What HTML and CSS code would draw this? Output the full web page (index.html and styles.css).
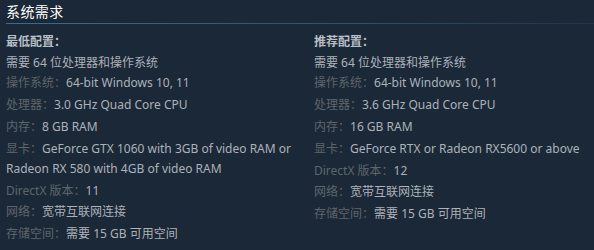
FILE: index.html
```
<!DOCTYPE html>
<html lang="zh-CN">
<head>
<meta charset="utf-8">
<link rel="stylesheet" href="styles.css">
</head>
<body>
<div class="sysreq">
  <h2 class="title">系统需求</h2>
  <div class="cols">
    <div class="col">
      <div class="head">最低配置：</div>
      <ul class="list">
        <li>需要 64 位处理器和操作系统</li>
        <li><span class="lbl">操作系统：</span>64-bit Windows 10, 11</li>
        <li><span class="lbl">处理器：</span>3.0 GHz Quad Core CPU</li>
        <li><span class="lbl">内存：</span>8 GB RAM</li>
        <li><span class="lbl">显卡：</span>GeForce GTX 1060 with 3GB of video RAM or Radeon RX 580 with 4GB of video RAM</li>
        <li><span class="lbl">DirectX 版本：</span>11</li>
        <li><span class="lbl">网络：</span>宽带互联网连接</li>
        <li><span class="lbl">存储空间：</span>需要 15 GB 可用空间</li>
      </ul>
    </div>
    <div class="col">
      <div class="head">推荐配置：</div>
      <ul class="list">
        <li>需要 64 位处理器和操作系统</li>
        <li><span class="lbl">操作系统：</span>64-bit Windows 10, 11</li>
        <li><span class="lbl">处理器：</span>3.6 GHz Quad Core CPU</li>
        <li><span class="lbl">内存：</span>16 GB RAM</li>
        <li><span class="lbl">显卡：</span>GeForce RTX or Radeon RX5600 or above</li>
        <li><span class="lbl">DirectX 版本：</span>12</li>
        <li><span class="lbl">网络：</span>宽带互联网连接</li>
        <li><span class="lbl">存储空间：</span>需要 15 GB 可用空间</li>
      </ul>
    </div>
  </div>
</div>
</body>
</html>
```

FILE: styles.css
```
html, body {
  margin: 0;
  padding: 0;
  background: #1b2838;
}
body {
  font-family: "Noto Sans", "Noto Sans CJK SC", sans-serif;
  font-size: 12px;
  color: #acb2b8;
}
.sysreq {
  padding: 0 0 0 6px;
}
.title {
  margin: 0;
  padding-top: 3px;
  height: 20px;
  font-size: 14px;
  line-height: 18px;
  font-weight: normal;
  letter-spacing: 0.03em;
  color: #ffffff;
  border-bottom: 1px solid transparent;
  border-image: linear-gradient(to right, #3d6c8d 0%, #2e4f69 60%, #22354a 100%) 1;
}
.cols {
  display: grid;
  grid-template-columns: 300px 1fr;
  column-gap: 8px;
  padding-top: 8px;
}
.head {
  line-height: 20px;
  margin-bottom: 1px;
  color: #b8bfc6;
  font-weight: bold;
}
.list {
  list-style: none;
  margin: 0;
  padding: 0;
}
.list li {
  line-height: 20px;
  margin-bottom: 1.9px;
}
.list li:first-child {
  margin-bottom: 0;
}
.lbl {
  color: #5f656c;
}
```
